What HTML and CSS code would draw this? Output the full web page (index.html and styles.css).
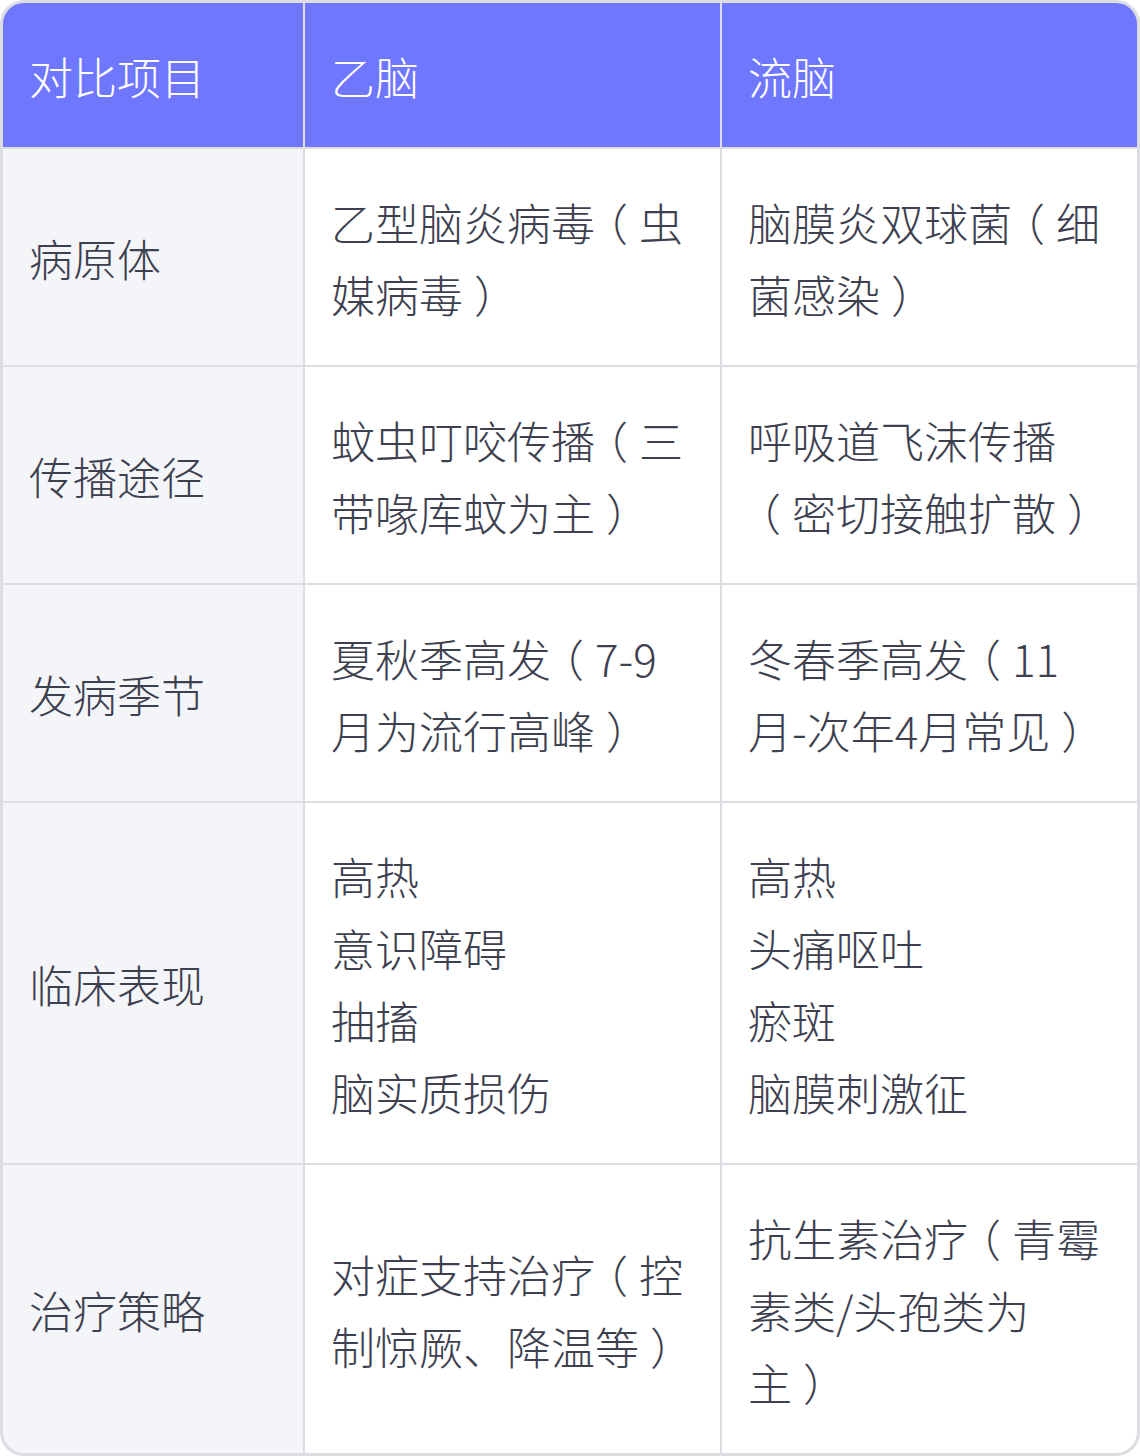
FILE: index.html
```html
<!DOCTYPE html>
<html lang="zh-CN">
<head>
<meta charset="utf-8">
<title>乙脑与流脑对比</title>
<link rel="stylesheet" href="styles.css">
</head>
<body>
<div class="table">
  <div class="cell head">对比项目</div>
  <div class="cell head">乙脑</div>
  <div class="cell head">流脑</div>

  <div class="cell label">病原体</div>
  <div class="cell"><div>乙型脑炎病毒<span class="p">（</span>虫媒病毒<span class="p">）</span></div></div>
  <div class="cell"><div>脑膜炎双球菌<span class="p">（</span>细菌感染<span class="p">）</span></div></div>

  <div class="cell label">传播途径</div>
  <div class="cell"><div>蚊虫叮咬传播<span class="p">（</span>三带喙库蚊为主<span class="p">）</span></div></div>
  <div class="cell"><div>呼吸道飞沫传播<span class="p">（</span>密切接触扩散<span class="p">）</span></div></div>

  <div class="cell label">发病季节</div>
  <div class="cell"><div>夏秋季高发<span class="p">（</span>7-9月为流行高峰<span class="p">）</span></div></div>
  <div class="cell"><div>冬春季高发<span class="p">（</span>11月-次年4月常见<span class="p">）</span></div></div>

  <div class="cell label">临床表现</div>
  <div class="cell">
    <div>高热</div>
    <div>意识障碍</div>
    <div>抽搐</div>
    <div>脑实质损伤</div>
  </div>
  <div class="cell">
    <div>高热</div>
    <div>头痛呕吐</div>
    <div>瘀斑</div>
    <div>脑膜刺激征</div>
  </div>

  <div class="cell label">治疗策略</div>
  <div class="cell"><div>对症支持治疗<span class="p">（</span>控制惊厥、降温等<span class="p">）</span></div></div>
  <div class="cell"><div>抗生素治疗<span class="p">（</span>青霉素类/头孢类为主<span class="p">）</span></div></div>
</div>
</body>
</html>
```
FILE: styles.css
```css
html, body {
  margin: 0;
  padding: 0;
  background: #ffffff;
}

.table {
  box-sizing: border-box;
  width: 1140px;
  display: grid;
  grid-template-columns: 300px 415px 415px;
  gap: 2px;
  border: 3px solid #dcdde3;
  border-radius: 24px;
  overflow: hidden;
  background: #dcdde3;
  font-family: "Noto Sans CJK SC", "Noto Sans", sans-serif;
  font-weight: 300;
  font-size: 44px;
  line-height: 72px;
  color: #3d404f;
  text-spacing-trim: space-all;
}

.cell {
  display: flex;
  flex-direction: column;
  justify-content: center;
  padding: 37px 28px 35px 26px;
  background: #ffffff;
  min-width: 0;
}

.cell.head {
  background: #7077ff;
  color: #ffffff;
}

.cell.label {
  background: #f4f5f9;
}

/* full-width parentheses drawn centred in their em box */
.p {
  font-feature-settings: "halt" 1;
  margin: 0 11px;
}
```
